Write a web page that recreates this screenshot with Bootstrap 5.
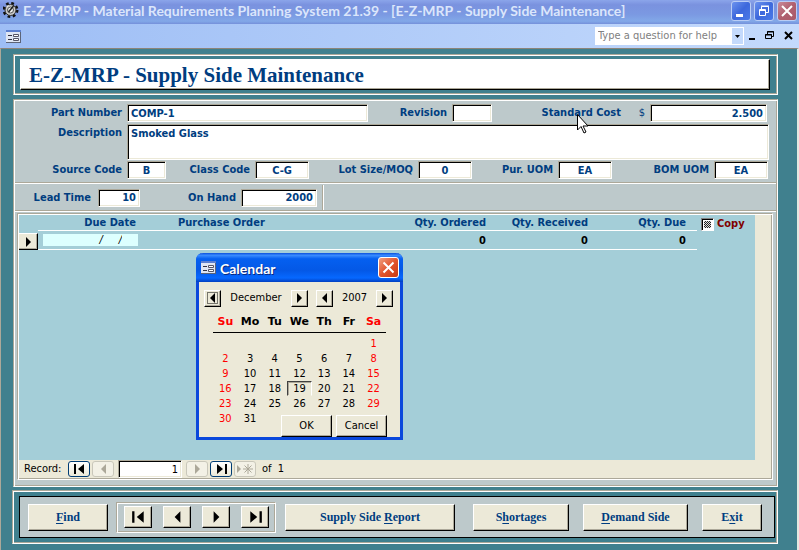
<!DOCTYPE html>
<html lang="en">
<head>
<meta charset="utf-8">
<meta name="viewport" content="width=device-width, initial-scale=1">
<title>E-Z-MRP - Supply Side Maintenance</title>
<link href="https://cdn.jsdelivr.net/npm/bootstrap@5.3.0/dist/css/bootstrap.min.css" rel="stylesheet">
<style>
:root { --navy:#003d80; --beige:#ece9d8; --shade:#aca899; --panel:#bdc9cb; --teal:#40808e; --aqua:#a4ced8; }
body { background:var(--teal); font-family:"DejaVu Sans Condensed","Liberation Sans",sans-serif; font-size:11px; line-height:14px; color:#000; }
button, input { font:inherit; color:inherit; border-radius:0; }
button { padding:0; border:0; background:none; }
svg { display:block; flex:none; }
.app-title { height:24px; padding:0 2px 0 3px; background:linear-gradient(#8ba5ea,#7a92df 20%,#7b99e2 60%,#82a8e8 88%,#7590da); color:#dbe6fb; }
.app-title h1 { font:bold 14px/22px Lato,"Open Sans",sans-serif; margin:0; }
.win-set { gap:3px; padding-top:1px; }
.win-btn { width:20px; height:20px; border:1px solid #b9cdf5; border-radius:3px; background:linear-gradient(135deg,#6c93ee,#3d68dc 50%,#4a7ae8); }
.win-close { background:linear-gradient(135deg,#c98a98,#b06070 50%,#a85a68); }
.app-menu { height:24px; padding:0 5px 0 6px; background:linear-gradient(90deg,#9ebef5,#c4dafc); }
.help-box { width:149px; height:18px; background:#fff; }
.help-box input { border:0; padding:0 3px; min-width:0; color:#808080; outline:0; }
.help-box input::placeholder { color:#808080; opacity:1; }
.help-box button { width:11px; margin:1px 1px 1px 0; background:#c4dafc; }
.workspace { min-height:calc(100vh - 48px); border:1px solid var(--shade); border-top-color:#8c8478; border-right:2px solid #e4e8e0; border-bottom:0; padding:5px 19px 6px 11px; }
.etched { border:1px solid; border-color:var(--shade) #fff #fff var(--shade); box-shadow:inset 1px 1px #fff,inset -1px -1px var(--shade); padding:1px; }
.raised { border:1px solid; border-color:#fff #000 #000 #fff; box-shadow:inset -1px -1px var(--shade); background:var(--beige); }
.banner { padding:4px 7px 4px 6px; margin-left:1px; }
.banner h2 { margin:0; height:31px; padding-left:8px; background:#fff; color:#003d80; font:bold 21px/30px "Liberation Serif",serif; }
.main-form { margin:4px 0 3px 1px; background:var(--panel); color:var(--navy); font-weight:bold; }
.lbl { flex:1 0 auto; text-align:right; padding-right:5px; white-space:nowrap; }
.sunk { background:#fff; border:1px solid; border-color:var(--shade) #fff #fff var(--shade); box-shadow:inset 1px 1px #000,inset -1px -1px var(--beige); padding:0 3px; height:18px; min-width:0; flex:none; outline:0; }
.w-first { width:112px; flex:none; }
.w-84 { flex:1 1 84px; } .w-134 { flex:1 1 134px; } .w-24 { flex:none; width:24px; }
.w-89 { flex:1 1 89px; } .w-109 { flex:1 1 109px; } .w-86 { flex:1 1 86px; } .w-102 { flex:1 1 102px; }
.i-part { width:241px; } .i-rev { width:40px; } .i-cost { width:117px; } .i-code { width:39px; } .i-std { width:54px; } .i-hand { width:76px; } .i-lead { width:42px; }
.row-one { padding:3px 9px 0 0; height:21px; }
.row-desc { padding:2px 7px 0 0; }
.row-desc .lbl { padding-top:2px; }
.row-desc textarea { height:36px; resize:none; display:block; flex:1 1 auto; font:inherit; color:inherit; padding:2px 3px; border-radius:0; }
.row-codes { padding:1px 8px 3px 0; height:22px; }
.rule-h { height:2px; border-top:1px solid var(--shade); border-bottom:1px solid #fff; }
.rule-v { width:2px; border-left:1px solid var(--shade); border-right:1px solid #fff; margin-left:5px; }
.row-stock { height:26px; padding-top:1px; }
.w-lead { width:83px; padding-right:7px; flex:none; } .w-hand { width:101px; flex:none; }
.subform { margin:1px 3px 5px 2px; background:var(--beige); }
.lines { background:var(--aqua); height:245px; min-width:0; }
.lines table { table-layout:fixed; width:100%; border-collapse:separate; border-spacing:0; }
.lines th { height:16px; padding:0; line-height:15px; border-bottom:1px solid #fff; }
.lines td { height:18px; padding:2px 0 0; line-height:14px; border-bottom:1px solid #fff; color:#000; }
.lines .no-line { border-bottom:0; }
.lines .qty { text-align:right; padding-right:11px; }
.lines .h-due { text-align:right; padding-right:2px; }
.lines .h-po { padding-left:40px; }
.rec-sel { width:19px; height:17px; border-left:0; }
.due-in { border:0; background:#dff; width:95px; height:12px; margin:1px 0 0 5px; padding:0 16px 0 0; text-align:right; display:block; font-style:italic; font-weight:normal; color:#000; outline:0; }
.copy-col { width:58px; flex:none; padding:1px 0 0 4px; height:17px; color:#800000; }
.copy-col label { padding-left:3px; }
.tri { appearance:none; width:13px; height:13px; margin:0; border:1px solid; border-color:#808080 #fff #fff #808080; box-shadow:inset 1px 1px #000,inset 2px 2px #fff,inset -2px -2px #fff; background:repeating-conic-gradient(#222 0 25%,#ddd 0 50%) 0 0/2px 2px; }
.bar-right { width:16px; flex:none; }
.recnav { height:18px; color:#000; font-weight:normal; padding-left:5px; gap:2px; }
.recnav label { width:42px; }
.recnav .sunk { width:64px; margin:0 2px; }
.rn { height:16px; width:22px; border:1px solid #003c74; border-radius:3px; background:linear-gradient(#fff,#ece9d8); color:#000; }
.rn:disabled { border-color:#c9c7ba; background:#f3f1e6; color:var(--shade); }
.footer-panel { padding:5px 2px 5px 6px; }
.footer-box { border:1px solid #000; background:var(--panel); height:42px; padding:3px 12px 3px 8px; }
.cmd { height:27px; color:var(--navy); font:bold 12px/24px "Liberation Serif",serif; }
.cmd u { text-underline-offset:2px; }
.c-find { flex:0 1 80px; } .c-rep { flex:0 1 170px; margin:0 4px 0 9px; } .c-short { flex:0 1 96px; } .c-dem { flex:0 1 105px; } .c-exit { flex:0 1 60px; }
.nav-group { width:160px; height:31px; padding:3px 6px 0 7px; margin-left:8px; }
.nav-group .raised { width:28px; height:22px; }
.cal { position:absolute; left:196px; top:253px; width:207px; height:187px; background:var(--beige); border:3px solid #0a48dc; border-top:0; border-radius:7px 7px 0 0; }
.cal-title { height:29px; margin:0 -3px; padding:0 4px 0 5px; border-radius:7px 7px 0 0; background:linear-gradient(#0a50dc,#3a8cff 8%,#0560f0 20%,#0458e6 60%,#0668ff 86%,#0340c0); color:#fff; }
.cal-title h3 { font:bold 14px/20px Lato,"Open Sans",sans-serif; margin:0; padding-top:2px; text-shadow:1px 1px #0a2a80; }
.cal-close { width:21px; height:21px; border:1px solid #fff; border-radius:3px; background:linear-gradient(135deg,#f0a080,#e2552e 50%,#c83a12); }
.cal-nav { height:18px; margin:7px 7px 0 5px; }
.cal-nav .raised { width:17px; height:17px; }
.cal-nav .w-mon { width:70px; } .cal-nav .w-yr { width:43px; }
.cal table { width:173px; margin:5px auto 0 14px; table-layout:fixed; text-align:center; border-collapse:separate; border-spacing:0; }
.cal th { height:21px; padding:0; border-bottom:1px solid #000; font:bold 11px/14px "DejaVu Sans",sans-serif; }
.cal tbody tr:first-child td { height:18px; padding-top:3px; }
.cal td { height:15px; padding:0; line-height:13px; }
.cal th:first-child, .cal th:last-child, .cal td:first-child, .cal td:nth-child(7) { color:#f00; }
.cal .today { border:1px solid; border-color:#404040 #fff var(--beige) #404040; box-shadow:inset 1px 1px var(--shade); line-height:11px; }
.cal-actions { position:absolute; right:13px; bottom:0; }
.cal-actions .raised { width:51px; height:22px; }
.pointer { position:absolute; left:577px; top:114px; }
</style>
<script src="https://cdn.jsdelivr.net/npm/bootstrap@5.3.0/dist/js/bootstrap.bundle.min.js"></script>
</head>
<body>
<svg width="0" height="0" class="position-absolute" aria-hidden="true">
  <symbol id="left" viewBox="0 0 13 12"><path d="M9 1v10L4 6z" fill="currentColor"/></symbol>
  <symbol id="right" viewBox="0 0 13 12"><path d="M4 1v10l5-5z" fill="currentColor"/></symbol>
  <symbol id="first" viewBox="0 0 13 12"><path d="M1 1h2v10H1zM11 1v10L5 6z" fill="currentColor"/></symbol>
  <symbol id="last" viewBox="0 0 13 12"><path d="M10 1h2v10h-2zM2 1v10l6-5z" fill="currentColor"/></symbol>
  <symbol id="form" viewBox="0 0 15 13"><path d="M0 0h15v13H0z" fill="#5c6478"/><path d="M0 0h14v12H0z" fill="#dfe6f4"/><path d="M0 0h15v2H0z" fill="#5b7fd0"/><path d="M2 5h4v1H2zM2 9h4v1H2z" fill="#334"/><path d="M7.500 4.500h5v2h-5zM7.500 8.500h5v2h-5z" fill="#fff" stroke="#556"/></symbol>
</svg>

<header>
  <div class="app-title d-flex align-items-start">
    <svg width="16" height="19" viewBox="0 0 16 19"><g transform="translate(7.500 10)"><circle r="6.500" fill="none" stroke="#111" stroke-width="3" stroke-dasharray="2.600 2.500"/><circle r="5.500" fill="#c9c9c9" stroke="#333"/><circle r="3" fill="#eee" stroke="#555"/><path d="M-2 2L3-4" stroke="#222" stroke-width="1.500"/><path d="M-4-3l2-2" stroke="#fff"/></g></svg>
    <h1 class="ms-1 flex-grow-1 text-nowrap">E-Z-MRP - Material Requirements Planning System 21.39 - [E-Z-MRP - Supply Side Maintenance]</h1>
    <div class="win-set d-flex">
      <button class="win-btn" aria-label="Minimize"><svg width="18" height="18"><path d="M4 12h7v3H4z" fill="#fff"/></svg></button>
      <button class="win-btn" aria-label="Restore"><svg width="18" height="18" fill="none" stroke="#fff"><path d="M6.500 7V4.500h7v6H11M6 4h8"/><path d="M4.500 7.500h6v6h-6zM4 8.500h7"/></svg></button>
      <button class="win-btn win-close" aria-label="Close"><svg width="18" height="18"><path d="M4 4l10 10M14 4L4 14" stroke="#fff" stroke-width="2"/></svg></button>
    </div>
  </div>
  <div class="app-menu d-flex align-items-center">
    <svg width="15" height="13"><use href="#form"/></svg>
    <div class="help-box d-flex ms-auto">
      <input class="flex-grow-1" type="text" placeholder="Type a question for help" aria-label="Type a question for help">
      <button aria-label="Show questions"><svg width="11" height="16"><path d="M3 7h5L5.500 10z"/></svg></button>
    </div>
    <button aria-label="Minimize form"><svg width="20" height="14"><path d="M5 9h6v2H5z"/></svg></button>
    <button aria-label="Restore form"><svg width="17" height="14" fill="none" stroke="#000"><path d="M3.500 5V2.500h6v5H8M3 3h7"/><path d="M1.500 5.500h6v4h-6zM1 6h7"/></svg></button>
    <button aria-label="Close form"><svg width="13" height="14"><path d="M4 3l7 7M11 3l-7 7" stroke="#000" stroke-width="2"/></svg></button>
  </div>
</header>

<main class="workspace">
  <div class="etched banner"><h2 class="raised">E-Z-MRP - Supply Side Maintenance</h2></div>

  <section class="etched main-form">
    <div class="row-one d-flex align-items-center">
      <label class="lbl w-first" for="part">Part Number</label><input class="sunk i-part" id="part" value="COMP-1">
      <label class="lbl w-84" for="rev">Revision</label><input class="sunk i-rev" id="rev">
      <label class="lbl w-134" for="cost">Standard Cost</label><span class="lbl w-24 fw-normal">$</span><input class="sunk i-cost text-end" id="cost" value="2.500">
    </div>
    <div class="row-desc d-flex">
      <label class="lbl w-first" for="desc">Description</label><textarea class="sunk" id="desc">Smoked Glass</textarea>
    </div>
    <div class="row-codes d-flex align-items-center">
      <label class="lbl w-first" for="src">Source Code</label><input class="sunk i-code text-center" id="src" value="B">
      <label class="lbl w-89" for="cls">Class Code</label><input class="sunk i-std text-center" id="cls" value="C-G">
      <label class="lbl w-109" for="lot">Lot Size/MOQ</label><input class="sunk i-std text-center" id="lot" value="0">
      <label class="lbl w-86" for="pur">Pur. UOM</label><input class="sunk i-std text-center" id="pur" value="EA">
      <label class="lbl w-102" for="bom">BOM UOM</label><input class="sunk i-std text-center" id="bom" value="EA">
    </div>
    <div class="rule-h"></div>
    <div class="row-stock d-flex align-items-center">
      <label class="lbl w-lead" for="lead">Lead Time</label><input class="sunk i-lead text-end" id="lead" value="10">
      <label class="lbl w-hand" for="hand">On Hand</label><input class="sunk i-hand text-end" id="hand" value="2000">
      <div class="rule-v align-self-stretch"></div>
    </div>
    <div class="rule-h"></div>

    <div class="etched subform">
      <div class="d-flex">
        <div class="lines d-flex flex-grow-1">
          <div class="flex-grow-1">
            <table>
              <colgroup><col style="width:19px"><col style="width:100px"><col><col style="width:100px"><col style="width:102px"><col style="width:98px"></colgroup>
              <thead><tr><th class="no-line"></th><th class="h-due">Due Date</th><th class="h-po">Purchase Order</th><th class="qty">Qty. Ordered</th><th class="qty">Qty. Received</th><th class="qty">Qty. Due</th></tr></thead>
              <tbody><tr><td class="no-line"><button class="raised rec-sel d-flex align-items-center justify-content-center" aria-label="Current record"><svg width="13" height="12"><use href="#right"/></svg></button></td><td class="align-top"><input class="due-in" aria-label="Due Date" value="/     /"></td><td></td><td class="qty">0</td><td class="qty">0</td><td class="qty">0</td></tr></tbody>
            </table>
          </div>
          <div class="copy-col d-flex align-items-center"><input class="tri flex-shrink-0" type="checkbox" id="copy"><label for="copy">Copy</label></div>
        </div>
        <div class="bar-right"></div>
      </div>
      <div class="recnav d-flex align-items-center">
        <label for="recno">Record:</label>
        <button class="rn d-flex align-items-center justify-content-center" aria-label="First record"><svg width="13" height="12"><use href="#first"/></svg></button>
        <button class="rn d-flex align-items-center justify-content-center" disabled aria-label="Previous record"><svg width="13" height="12"><use href="#left"/></svg></button>
        <input class="sunk text-end" id="recno" value="1">
        <button class="rn d-flex align-items-center justify-content-center" disabled aria-label="Next record"><svg width="13" height="12"><use href="#right"/></svg></button>
        <button class="rn d-flex align-items-center justify-content-center" aria-label="Last record"><svg width="13" height="12"><use href="#last"/></svg></button>
        <button class="rn d-flex align-items-center justify-content-center" disabled aria-label="New record"><svg width="18" height="12" stroke="currentColor"><path d="M1 2v8l4-4z" fill="currentColor" stroke="none"/><path d="M12 1v10M7 6h10M8.500 2.500l7 7M15.500 2.500l-7 7"/></svg></button>
        <span class="ms-1">of&nbsp; 1</span>
      </div>
    </div>
  </section>

  <footer class="etched footer-panel">
    <div class="footer-box d-flex align-items-center">
      <button class="raised cmd c-find"><u>F</u>ind</button>
      <div class="etched nav-group d-flex justify-content-between">
        <button class="raised d-flex align-items-center justify-content-center" aria-label="First item"><svg width="15" height="14"><use href="#first"/></svg></button>
        <button class="raised d-flex align-items-center justify-content-center" aria-label="Previous item"><svg width="15" height="14"><use href="#left"/></svg></button>
        <button class="raised d-flex align-items-center justify-content-center" aria-label="Next item"><svg width="15" height="14"><use href="#right"/></svg></button>
        <button class="raised d-flex align-items-center justify-content-center" aria-label="Last item"><svg width="15" height="14"><use href="#last"/></svg></button>
      </div>
      <button class="raised cmd c-rep">Supply Side <u>R</u>eport</button>
      <button class="raised cmd c-short ms-auto">S<u>h</u>ortages</button>
      <button class="raised cmd c-dem ms-auto"><u>D</u>emand Side</button>
      <button class="raised cmd c-exit ms-auto">E<u>x</u>it</button>
    </div>
  </footer>
</main>

<section class="cal" role="dialog" aria-label="Calendar">
  <div class="cal-title d-flex align-items-center">
    <svg width="15" height="13"><use href="#form"/></svg>
    <h3 class="ms-1 flex-grow-1">Calendar</h3>
    <button class="cal-close" aria-label="Close calendar"><svg width="19" height="19"><path d="M4.500 4.500l10 10M14.500 4.500l-10 10" stroke="#fff" stroke-width="2"/></svg></button>
  </div>
  <div class="cal-nav d-flex align-items-center">
    <button class="raised d-flex align-items-center justify-content-center" aria-label="Previous month"><svg width="13" height="12"><path d="M1.500.5h10v11h-10z" fill="none" stroke="#000" stroke-dasharray="1 1"/><use href="#left"/></svg></button>
    <span class="w-mon text-center">December</span>
    <button class="raised d-flex align-items-center justify-content-center" aria-label="Next month"><svg width="13" height="12"><use href="#right"/></svg></button>
    <button class="raised d-flex align-items-center justify-content-center ms-2" aria-label="Previous year"><svg width="13" height="12"><use href="#left"/></svg></button>
    <span class="w-yr text-center">2007</span>
    <button class="raised d-flex align-items-center justify-content-center" aria-label="Next year"><svg width="13" height="12"><use href="#right"/></svg></button>
  </div>
  <table>
    <thead><tr><th>Su</th><th>Mo</th><th>Tu</th><th>We</th><th>Th</th><th>Fr</th><th>Sa</th></tr></thead>
    <tbody>
      <tr><td></td><td></td><td></td><td></td><td></td><td></td><td>1</td></tr>
      <tr><td>2</td><td>3</td><td>4</td><td>5</td><td>6</td><td>7</td><td>8</td></tr>
      <tr><td>9</td><td>10</td><td>11</td><td>12</td><td>13</td><td>14</td><td>15</td></tr>
      <tr><td>16</td><td>17</td><td>18</td><td class="today">19</td><td>20</td><td>21</td><td>22</td></tr>
      <tr><td>23</td><td>24</td><td>25</td><td>26</td><td>27</td><td>28</td><td>29</td></tr>
      <tr><td>30</td><td>31</td><td></td><td></td><td></td><td></td><td></td></tr>
    </tbody>
  </table>
  <div class="cal-actions d-flex"><button class="raised me-1">OK</button><button class="raised">Cancel</button></div>
</section>

<svg class="pointer" width="13" height="21" viewBox="0 0 13 21" aria-hidden="true"><path d="M.5.5v15.500L4 12.500l3 6.500 2-1-3-6h5z" fill="#fff" stroke="#000"/></svg>
</body>
</html>
